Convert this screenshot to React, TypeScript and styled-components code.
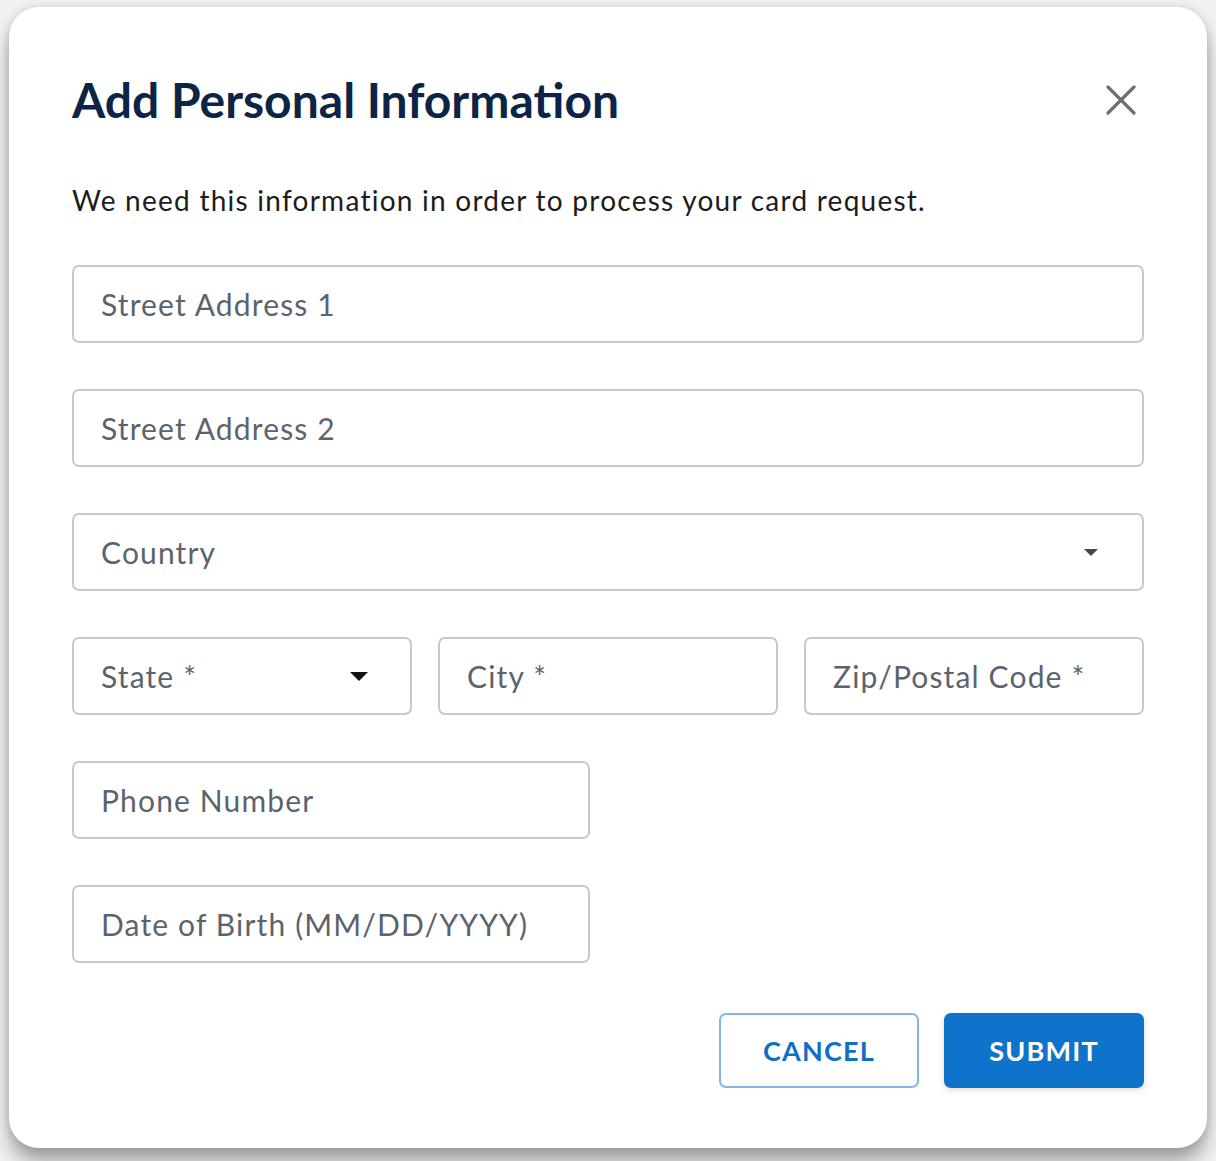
import styled, { createGlobalStyle } from "styled-components";

const GlobalStyle = createGlobalStyle`
    html, body {
        margin: 0;
        padding: 0;
        background: #f1f1f1;
        font-family: Lato, "Noto Sans", sans-serif;
    }
    #root {
        height: 1161px;
        overflow: hidden;
    }
`

export default function App() {
    return <>
        <GlobalStyle />
        <Page>
            <Dialog>
                <Header>
                    <Title>Add Personal Information</Title>
                    <CloseButton aria-label="Close">
                        <svg width="30" height="30" viewBox="0 0 30 30">
                            <path d="M2 2 L28 28 M28 2 L2 28" stroke="#6f6f6f" strokeWidth="3.2" strokeLinecap="round" />
                        </svg>
                    </CloseButton>
                </Header>
                <Subtitle>We need this information in order to process your card request.</Subtitle>
                <Form>
                    <Field><Placeholder>Street Address 1</Placeholder></Field>
                    <Field><Placeholder>Street Address 2</Placeholder></Field>
                    <Field>
                        <Placeholder>Country</Placeholder>
                        <Caret $size={14} $color="#474747" $shift={2} />
                    </Field>
                    <Row>
                        <Field>
                            <Placeholder>State *</Placeholder>
                            <Caret $size={18} $color="#111" $shift={0} />
                        </Field>
                        <Field><Placeholder>City *</Placeholder></Field>
                        <Field><Placeholder>Zip/Postal Code *</Placeholder></Field>
                    </Row>
                    <Field $width={518}><Placeholder>Phone Number</Placeholder></Field>
                    <Field $width={518}><Placeholder>Date of Birth (MM/DD/YYYY)</Placeholder></Field>
                </Form>
                <Actions>
                    <Button $variant="outline">CANCEL</Button>
                    <Button $variant="solid">SUBMIT</Button>
                </Actions>
            </Dialog>
        </Page>
    </>
}

const Page = styled.div`
    padding: 7px 9px 0;
`

const Dialog = styled.div`
    box-sizing: border-box;
    width: 1198px;
    height: 1141px;
    background: #fff;
    border-radius: 30px;
    padding: 64px 63px 0 63px;
    box-shadow: 0 14px 18px rgba(0, 0, 0, 0.32), 0 0 10px rgba(0, 0, 0, 0.12);
    display: flex;
    flex-direction: column;
`

const Header = styled.div`
    display: flex;
    align-items: center;
    justify-content: space-between;
    height: 58px;
`

const Title = styled.h1`
    margin: 0;
    font-size: 48px;
    font-weight: 700;
    line-height: 58px;
    color: #0c2445;
`

const CloseButton = styled.button`
    border: none;
    background: none;
    padding: 0;
    margin-right: 8px;
    width: 30px;
    height: 30px;
    display: flex;
`

const Subtitle = styled.p`
    margin: 54px 0 0;
    font-size: 28px;
    line-height: 34px;
    color: #1c1c1c;
    letter-spacing: 1.25px;
`

const Form = styled.div`
    margin-top: 48px;
    display: flex;
    flex-direction: column;
    gap: 46px;
`

const Row = styled.div`
    display: grid;
    grid-template-columns: repeat(3, 1fr);
    gap: 26px;
`

const Field = styled.div<{ $width?: number }>`
    box-sizing: border-box;
    width: ${p => p.$width ? `${p.$width}px` : '100%'};
    height: 78px;
    border: 2px solid #c9c9c9;
    border-radius: 7px;
    padding: 0 42px 0 27px;
    display: flex;
    align-items: center;
    justify-content: space-between;
`

const Placeholder = styled.span`
    font-size: 30px;
    color: #5c636d;
    letter-spacing: 1.15px;
`

const Caret = styled.span<{ $size: number, $color: string, $shift: number }>`
    width: 0;
    height: 0;
    border-left: ${p => p.$size / 2}px solid transparent;
    border-right: ${p => p.$size / 2}px solid transparent;
    border-top: ${p => p.$size / 2}px solid ${p => p.$color};
    margin-right: ${p => p.$shift}px;
`

const Actions = styled.div`
    margin-top: 50px;
    display: flex;
    justify-content: flex-end;
    gap: 25px;
`

const Button = styled.button<{ $variant: 'outline' | 'solid' }>`
    box-sizing: border-box;
    width: 200px;
    height: 75px;
    border-radius: 7px;
    font-family: Lato, "Noto Sans", sans-serif;
    font-size: 27px;
    font-weight: 700;
    letter-spacing: 1.2px;
    cursor: pointer;
    border: 2px solid ${p => p.$variant === 'outline' ? '#82b6e6' : '#0f73cc'};
    background: ${p => p.$variant === 'outline' ? '#fff' : '#0f73cc'};
    color: ${p => p.$variant === 'outline' ? '#0f6fc7' : '#fff'};
    box-shadow: ${p => p.$variant === 'solid' ? '0 2px 6px rgba(0,0,0,0.15)' : 'none'};
`
